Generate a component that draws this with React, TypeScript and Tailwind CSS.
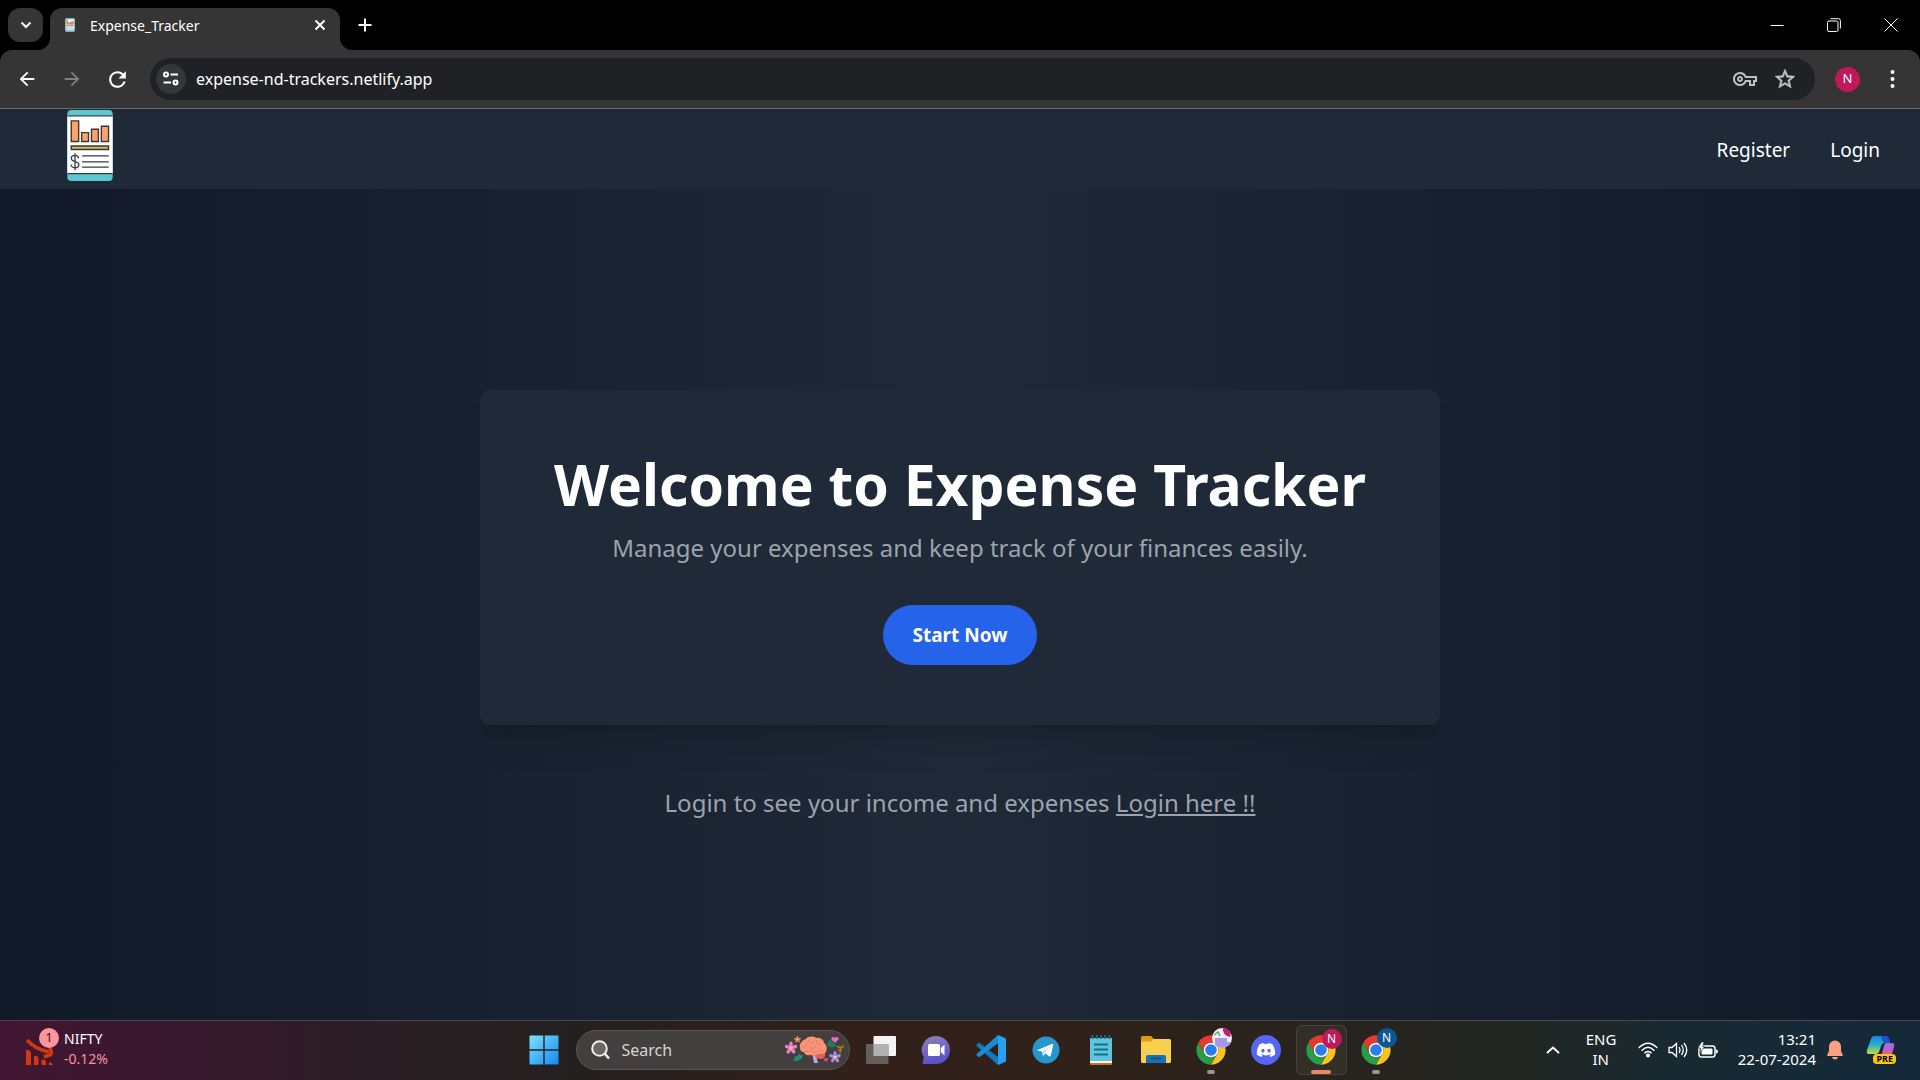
import React from "react";
import { MdArrowBack, MdArrowForward, MdRefresh, MdStarOutline, MdOutlineVpnKey } from "react-icons/md";
import { FaDiscord } from "react-icons/fa";

function SiteControlsIcon() {
  return (
    <svg width="18" height="18" viewBox="0 0 18 18" fill="none" stroke="#fff" strokeWidth="2" aria-hidden="true">
      <circle cx="4" cy="4.500" r="2" />
      <path d="M8.500 4.500H16" />
      <circle cx="13.500" cy="12.500" r="2" />
      <path d="M1.500 12.500H9" />
    </svg>
  );
}

function ReportLogo({ className }: { className: string }) {
  return (
    <svg className={className} viewBox="0 0 46 72" aria-hidden="true">
      <rect width="46" height="72" rx="4" fill="#5bc8cf" />
      <path d="M0 5.500H46V65H0Z" fill="#fff" />
      <path d="M0 6H46M0 64.500H46" stroke="#2f3a4a" strokeWidth="1.200" />
      <g fill="#fba36b" stroke="#3d3636" strokeWidth="1.400">
        <path d="M4 11H11.500V32H4Z" />
        <path d="M14.500 23H21.500V32H14.500Z" />
        <path d="M24.500 19.500H31.500V32H24.500Z" />
        <path d="M34.500 16.500H41.800V32H34.500Z" />
        <path d="M4 36.500H41.800V40H4Z" fill="#cdc15c" />
      </g>
      <path d="M15 46.500H42M15 52.500H42M15 58H42" stroke="#333c4c" strokeWidth="1.300" />
      <path d="M11.500 49C11 46.500 9.500 46 7.700 46C5.500 46 4 47.200 4 49C4 53.500 11.700 51 11.700 55.500C11.700 57.500 10 58.600 7.800 58.600C5.500 58.600 4 57.500 3.700 55.300M7.800 43.800V61" fill="none" stroke="#333c4c" strokeWidth="1.300" />
    </svg>
  );
}

function ChromeIcon() {
  return (
    <svg width="32" height="32" viewBox="0 0 48 48" aria-hidden="true">
      <path d="M4.950 13A22 22 0 0 1 43.050 13L24 13A11 11 0 0 0 14.470 29.500Z" fill="#e53a2e" />
      <path d="M24 46A22 22 0 0 1 4.950 13L14.470 29.500A11 11 0 0 0 33.530 29.500Z" fill="#2a9b47" />
      <path d="M43.050 13A22 22 0 0 1 24 46L33.530 29.500A11 11 0 0 0 24 13Z" fill="#fcc31e" />
      <circle cx="24" cy="24" r="11" fill="#fff" />
      <circle cx="24" cy="24" r="8.700" fill="#2b7de9" />
    </svg>
  );
}

function BrainArt() {
  const flower = (x: number, y: number, r: number, petal: string, heart: string) => (
    <g key={`${x}-${y}`} transform={`translate(${x} ${y})`}>
      {[0, 72, 144, 216, 288].map((a) => (
        <ellipse key={a} cx="0" cy={-r * 0.6} rx={r * 0.3} ry={r * 0.5} fill={petal} transform={`rotate(${a})`} />
      ))}
      <circle r={r * 0.25} fill={heart} />
    </g>
  );
  return (
    <svg width="60" height="28" viewBox="0 0 60 28" aria-hidden="true">
      <path d="M8 25C9 20 13 18 18 19C18 23 14 26 8 25Z" fill="#1f7a64" />
      <path d="M10 24L17 20M11 20L13 24M14 18L16 22" stroke="#2fa384" strokeWidth="1" />
      <path d="M42 9C42 6 44 4 46 4C47 7 51 7 51 10C48 12 44 12 42 9Z" fill="#1f7a64" />
      <path d="M52 10C54 12 56 12 59 10M56 11L55 17M53 14L57 13" stroke="#a8791f" strokeWidth="1.600" fill="none" />
      <path d="M27 17L31 19L33 27H29Z" fill="#b9a5e8" />
      <path d="M15 12C14 8 17 4 21 3C23 0 29 0 31 2C35 1 39 4 39 7C43 9 42 16 40 17C41 21 37 24 33 22C30 22 29 19 26 19C22 20 19 18 19 16C16 16 15 14 15 12Z" fill="#f79478" />
      <path d="M30 19C34 17 38 18 40 17C41 21 37 24 33 22C31 22 30 20 30 19Z" fill="#e8604f" />
      <path d="M18 11C21 11 22 9 21 7M24 4C24 7 27 8 29 6M32 4C31 7 33 9 36 8M25 12C28 13 31 12 31 9M35 12C34 15 37 16 39 14M20 15C23 16 25 14 28 16C30 17 33 16 34 14" stroke="#e07a64" strokeWidth="0.800" fill="none" />
      {flower(6, 12, 6, "#e87fc8", "#ffd23f")}
      {flower(12.5, 3.5, 3.2, "#f0875a", "#ffd9a0")}
      {flower(50, 21, 5.5, "#a58bea", "#ffe36b")}
      <path d="M50 7L46.500 3.500C45.500 1.500 48 0 49.800 1.800C51.500 0 54.500 1 53.500 3.500Z" fill="#ef6db4" />
      <path d="M41 26L38.500 23.500C38 22 40 21.500 41 22.500C42 21.500 44 22 43.200 23.800Z" fill="#e0457b" />
    </svg>
  );
}

function TaskButton({ label, children, state }: { label: string; children: React.ReactNode; state?: "open" | "active" }) {
  return (
    <button
      aria-label={label}
      className={
        state === "active"
          ? "relative mx-[2px] flex h-[50px] w-[51px] items-center justify-center rounded-md border border-white/10 bg-white/5"
          : "relative flex h-[50px] w-[55px] items-center justify-center"
      }
    >
      {children}
      {state === "open" && <span className="absolute bottom-[1px] h-1 w-2 rounded-full bg-[#9b9593]" />}
      {state === "active" && <span className="absolute bottom-0 h-1 w-5 rounded-full bg-[#f08468]" />}
    </button>
  );
}

function ProfileBadge({ className, children }: { className: string; children?: React.ReactNode }) {
  return (
    <span className={`absolute top-[3px] flex size-5 items-center justify-center overflow-hidden rounded-full text-[12px] text-white ${className}`}>
      {children}
    </span>
  );
}

function TabStrip() {
  return (
    <div className="flex h-[50px] items-end bg-black">
      <button aria-label="Search tabs" className="mb-2 ml-2 flex h-[34px] w-[35px] shrink-0 items-center justify-center rounded-xl bg-[#353535]">
        <svg width="12" height="8" viewBox="0 0 12 8" fill="none" stroke="#fff" strokeWidth="2" aria-hidden="true">
          <path d="M1.500 1.500L6 6L10.500 1.500" />
        </svg>
      </button>
      <div className="relative ml-[7px] flex h-[42px] w-[290px] items-center rounded-t-xl bg-[#353535] pr-[14px] pb-2 pl-[15px]">
        <svg className="absolute bottom-0 -left-3" width="12" height="12" aria-hidden="true">
          <path d="M12 0V12H0A12 12 0 0 0 12 0Z" fill="#353535" />
        </svg>
        <svg className="absolute -right-3 bottom-0" width="12" height="12" aria-hidden="true">
          <path d="M0 0V12H12A12 12 0 0 1 0 0Z" fill="#353535" />
        </svg>
        <ReportLogo className="h-[14px] w-[10px]" />
        <span className="ml-[15px] flex-1 text-[14px] text-white">Expense_Tracker</span>
        <button aria-label="Close tab">
          <svg width="12" height="12" viewBox="0 0 12 12" stroke="#fff" strokeWidth="2" aria-hidden="true">
            <path d="M1.500 1.500L10.500 10.500M10.500 1.500L1.500 10.500" />
          </svg>
        </button>
      </div>
      <button aria-label="New tab" className="mb-[18px] ml-[18px]">
        <svg width="14" height="14" viewBox="0 0 14 14" stroke="#fff" strokeWidth="2" aria-hidden="true">
          <path d="M7 0.500V13.500M0.500 7H13.500" />
        </svg>
      </button>
      <div className="mb-[18px] ml-auto flex items-center gap-[43px] pr-[22px]">
        <button aria-label="Minimize">
          <svg width="14" height="14" aria-hidden="true"><path d="M0.500 7.500H13.500" stroke="#fff" /></svg>
        </button>
        <button aria-label="Restore">
          <svg width="14" height="14" fill="none" stroke="#fff" aria-hidden="true">
            <rect x="0.500" y="3" width="10.500" height="10.500" rx="1.500" />
            <path d="M3.500 0.700H11.500Q13.400 0.700 13.400 2.700V10.500" />
          </svg>
        </button>
        <button aria-label="Close">
          <svg width="14" height="14" stroke="#fff" aria-hidden="true"><path d="M0.500 0.500L13.500 13.500M13.500 0.500L0.500 13.500" /></svg>
        </button>
      </div>
    </div>
  );
}

function Toolbar() {
  return (
    <div className="bg-black">
      <div className="flex h-[59px] items-center rounded-t-xl border-b border-[#6a6a6d] bg-[#353535] pr-[25px] pl-4">
        <button aria-label="Back"><MdArrowBack size={22} color="#fff" /></button>
        <button aria-label="Forward" className="ml-[23px]"><MdArrowForward size={22} color="#7e7e7e" /></button>
        <button aria-label="Reload" className="ml-[22px]"><MdRefresh size={25} color="#fff" /></button>
        <div className="ml-[20px] flex h-[42px] flex-1 items-center rounded-full bg-[#202125] pr-[18px] pl-[6px]">
          <button aria-label="View site information" className="flex size-[30px] items-center justify-center rounded-full bg-[#353639]">
            <SiteControlsIcon />
          </button>
          <input aria-label="Address" defaultValue="expense-nd-trackers.netlify.app" className="ml-[10px] flex-1 bg-transparent text-[16px] text-white outline-none" />
          <button aria-label="Manage passwords"><MdOutlineVpnKey size={24} color="#c1c1c3" /></button>
          <button aria-label="Bookmark this tab" className="ml-4"><MdStarOutline size={24} color="#c1c1c3" stroke="#c1c1c3" strokeWidth="0.500" /></button>
        </div>
        <button aria-label="Profile" className="ml-5 flex size-[25px] items-center justify-center rounded-full bg-[#c2185b] text-[13px] text-white">N</button>
        <button aria-label="Menu" className="ml-[30px]">
          <svg width="5" height="18" fill="#fff" aria-hidden="true">
            <circle cx="2.500" cy="2" r="2" /><circle cx="2.500" cy="9" r="2" /><circle cx="2.500" cy="16" r="2" />
          </svg>
        </button>
      </div>
    </div>
  );
}

function Taskbar() {
  return (
    <footer className="grid h-[60px] grid-cols-[1fr_auto_1fr] items-center border-t border-[#48484c] bg-[linear-gradient(90deg,#421632_0%,#38182e_9%,#2a1f24_20%,#242020_30%,#33201a_45%,#2e221b_60%,#26241f_72%,#222724_80%,#172a33_88%,#15293a_100%)] pb-[2px]">
      <a href="#widgets" className="flex items-center pl-[25px]">
        <span className="relative mt-1 block">
          <svg width="29" height="28" viewBox="0 0 29 28" fill="#cf3a0e" aria-hidden="true">
            <path d="M1 12H4L6 15V27H1ZM9 18H12L13.500 20V27H9ZM16.500 21.500H19L21 23V27H16.500ZM24 24.500H26L28 27H24Z" />
            <path d="M2 2C8 9 15 12 24 14M27 16L19 19M27 16L25 9" fill="none" stroke="#cf3a0e" strokeWidth="3.500" />
          </svg>
          <span className="absolute -top-[10px] left-[14px] flex size-5 items-center justify-center rounded-full bg-[#fc959c] text-[13px] text-[#3a1020]">1</span>
        </span>
        <span className="ml-[10px] pb-[2px] text-[14px] leading-5">
          <span className="block text-white">NIFTY</span>
          <span className="block text-[#f692a2]">-0.12%</span>
        </span>
      </a>
      <div className="flex items-center">
        <TaskButton label="Start">
          <svg width="30" height="30" viewBox="0 0 30 30" aria-hidden="true">
            <defs>
              <linearGradient id="win" x1="0" y1="0" x2="1" y2="1">
                <stop offset="0" stopColor="#7fe0ff" /><stop offset="1" stopColor="#0f8af0" />
              </linearGradient>
            </defs>
            <path d="M0.500 1Q0.500 0.500 1 0.500H14.300V14.300H0.500ZM15.700 0.500H29Q29.500 0.500 29.500 1V14.300H15.700ZM0.500 15.700H14.300V29.500H1Q0.500 29.500 0.500 29ZM15.700 15.700H29.500V29Q29.500 29.500 29 29.500H15.700Z" fill="url(#win)" />
          </svg>
        </TaskButton>
        <label className="mx-1 flex h-10 w-[274px] items-center rounded-full border border-[#5a5452] bg-[#433f3e] pr-1 pl-[14px]">
          <svg width="19" height="20" viewBox="0 0 19 20" fill="#6b6766" stroke="#f0f0f0" strokeWidth="2" aria-hidden="true">
            <circle cx="8.500" cy="8.500" r="7.300" /><path d="M13.700 13.700L18 18.500" strokeWidth="2.500" />
          </svg>
          <input aria-label="Search" placeholder="Search" className="ml-3 w-full min-w-0 flex-1 bg-transparent text-[16px] placeholder:text-[#d6d4d3] outline-none" />
          <BrainArt />
        </label>
        <TaskButton label="Task view">
          <svg width="30" height="28" viewBox="0 0 30 28" aria-hidden="true">
            <rect x="7.500" y="0" width="22.500" height="20" rx="1" fill="#f4f4f4" />
            <rect x="0" y="8" width="22.500" height="20" rx="1" fill="#6f6b69" fillOpacity="0.850" />
            <path d="M7.500 8H22.500V20H7.500Z" fill="#b1b1b1" />
          </svg>
        </TaskButton>
        <TaskButton label="Chat">
          <svg width="30" height="30" viewBox="0 0 30 30" aria-hidden="true">
            <defs>
              <linearGradient id="chat" x1="0" y1="0" x2="0.300" y2="1">
                <stop offset="0" stopColor="#8f82b8" /><stop offset="1" stopColor="#5a52c8" />
              </linearGradient>
            </defs>
            <path d="M15 1A14 14 0 1 1 15 29H1.500L3 22.500A14 14 0 0 1 15 1Z" fill="url(#chat)" />
            <rect x="7" y="9" width="12" height="12" rx="1.500" fill="#fff" />
            <path d="M19.800 13L23.500 9.500V20.500L19.800 17Z" fill="#fff" />
          </svg>
        </TaskButton>
        <TaskButton label="Visual Studio Code">
          <svg width="30" height="30" viewBox="0 0 30 30" aria-hidden="true">
            <path d="M0.700 11Q0 10.200 0.800 9.500L2.300 8.100Q3 7.600 3.700 8.100L22 22V30Z" fill="#1478bd" />
            <path d="M22 0V8.200L3.700 21.900Q3 22.400 2.300 21.900L0.800 20.500Q0 19.800 0.700 19Z" fill="#1a8ad4" />
            <path d="M22 0L29 3Q30 3.500 30 4.500V25.500Q30 26.500 29 27L22 30Z" fill="#27a0f0" />
          </svg>
        </TaskButton>
        <TaskButton label="Telegram">
          <svg width="28" height="28" viewBox="0 0 28 28" aria-hidden="true">
            <circle cx="14" cy="14" r="13.500" fill="#2497cf" />
            <path d="M5.500 14L20.500 7.800Q21.500 7.600 21.200 9L18.800 19.800Q18.300 21 17.200 20.300L13.300 17.500L11.500 19.500Q10.800 20 10.700 19L10 15.500L6 14.800Q5 14.400 5.500 14Z" fill="#fff" />
            <path d="M11 15.500L17.500 10.500L12.500 16.500L11.500 18.500Z" fill="#a9cfe6" />
          </svg>
        </TaskButton>
        <TaskButton label="Notepad">
          <svg width="24" height="30" viewBox="0 0 24 30" aria-hidden="true">
            <rect x="1" y="24" width="22" height="6" rx="1" fill="#c9711e" />
            <rect x="1" y="23" width="22" height="5" fill="#f4f4f0" />
            <path d="M1 3H23V26H1Z" fill="#5fc4dc" />
            <path d="M3.500 0V4M7.800 0V4M12 0V4M16.200 0V4M20.500 0V4" stroke="#16708a" strokeWidth="1.800" />
            <path d="M5 9.500H19M5 14.500H19M5 19.500H19" stroke="#14708c" strokeWidth="1.800" />
          </svg>
        </TaskButton>
        <TaskButton label="File Explorer">
          <svg width="30" height="27" viewBox="0 0 30 27" aria-hidden="true">
            <path d="M0 1.500Q0 0 1.500 0H10L13 3V8H0Z" fill="#dc9d13" />
            <path d="M0 5.500H10L12.500 3H28.500Q30 3 30 4.500V25.500Q30 27 28.500 27H1.500Q0 27 0 25.500Z" fill="#fbcf4e" />
            <path d="M5 27V21Q5 19 7 19H23Q25 19 25 21V27Z" fill="#1473b8" />
            <path d="M10 22.500H20" stroke="#0a4f85" strokeWidth="1.500" />
          </svg>
        </TaskButton>
        <TaskButton label="Chrome" state="open">
          <ChromeIcon />
          <ProfileBadge className="right-[7px] bg-[#f1eef4]">
            <svg width="20" height="20" aria-hidden="true">
              <path d="M11 0Q10 7 18 9L20 0Z" fill="#c81a78" />
              <path d="M3 10H15V14H20V20H3Z" fill="#a796ea" />
              <path d="M2 7L6 4L8 8" stroke="#74a06c" strokeWidth="1.500" fill="none" />
            </svg>
          </ProfileBadge>
        </TaskButton>
        <TaskButton label="Discord">
          <span className="flex size-[30px] items-center justify-center rounded-full bg-[#5566f0]"><FaDiscord size={20} color="#fff" /></span>
        </TaskButton>
        <TaskButton label="Chrome, profile N" state="active">
          <ChromeIcon />
          <ProfileBadge className="right-1 bg-[#c2185b]">N</ProfileBadge>
        </TaskButton>
        <TaskButton label="Chrome, second profile" state="open">
          <ChromeIcon />
          <ProfileBadge className="right-[7px] bg-[#0b5796]">N</ProfileBadge>
        </TaskButton>
      </div>
      <div className="flex items-center justify-end pr-6 text-[15px] leading-5 text-white">
        <button aria-label="Show hidden icons">
          <svg width="14" height="8" fill="none" stroke="#fff" strokeWidth="2" aria-hidden="true"><path d="M1 7L7 1.500L13 7" /></svg>
        </button>
        <button className="ml-[26px] w-[30px] pb-[2px] whitespace-nowrap">ENG<br />IN</button>
        <button aria-label="Network, volume and battery" className="ml-[22px] flex items-center gap-[10px]">
          <svg width="20" height="16" viewBox="0 0 20 16" fill="none" stroke="#fff" strokeWidth="1.500" aria-hidden="true">
            <path d="M0.700 6Q10 -3.500 19.300 6M3.600 8.700Q10 2 16.400 8.700M6.400 11.300Q10 7.500 13.600 11.300" />
            <circle cx="10" cy="13.500" r="1.300" fill="#fff" />
          </svg>
          <svg width="20" height="16" viewBox="0 0 20 16" fill="none" stroke="#fff" strokeWidth="1.300" aria-hidden="true">
            <path d="M1 5.500H4L8.500 1.500V14.500L4 10.500H1ZM11 5Q13 8 11 11M13.500 3Q17 8 13.500 13M16 1Q21.500 8 16 15" />
          </svg>
          <svg width="20" height="16" viewBox="0 0 20 16" aria-hidden="true">
            <rect x="1" y="4" width="16" height="11" rx="2.500" fill="none" stroke="#fff" strokeWidth="1.500" />
            <rect x="3.500" y="6.500" width="11" height="6" rx="1" fill="#fff" />
            <path d="M18 7.500Q20 7.500 20 9.500Q20 11.500 18 11.500Z" fill="#fff" />
            <path d="M3.500 0L0 6H2.500L2 11L6.500 4.500H4.500L6 0Z" fill="#fff" stroke="#172a33" strokeWidth="0.600" />
          </svg>
        </button>
        <button className="ml-5 pb-[2px] text-right whitespace-nowrap">13:21<br />22-07-2024</button>
        <button aria-label="Notifications" className="ml-[11px]">
          <svg width="16" height="20" viewBox="0 0 16 20" fill="#fba183" aria-hidden="true">
            <path d="M8 0.500A6 6 0 0 1 14 6.500V11L15.800 15Q16 16 15 16H1Q0 16 0.200 15L2 11V6.500A6 6 0 0 1 8 0.500ZM5 17H11Q10.500 19.500 8 19.500Q5.500 19.500 5 17Z" />
          </svg>
        </button>
        <button aria-label="Copilot" className="relative ml-[23px]">
          <svg width="30" height="29" viewBox="0 0 30 29" aria-hidden="true">
            <defs>
              <linearGradient id="cpa" x1="0" y1="0" x2="0" y2="1"><stop offset="0" stopColor="#1f7fe8" /><stop offset="0.500" stopColor="#29b2c8" /><stop offset="1" stopColor="#c8d83c" /></linearGradient>
              <linearGradient id="cpb" x1="0" y1="0" x2="0" y2="1"><stop offset="0" stopColor="#9a6bf0" /><stop offset="1" stopColor="#ee5a8a" /></linearGradient>
            </defs>
            <path d="M8 1H20Q22 1 23 4L24 8H18Q16 8 15 11L13 17Q12 19 10 19H3Q0 19 1 15L5 4Q6 1 8 1Z" fill="url(#cpa)" />
            <path d="M15 1H20Q22 1 23 4L24 8H19Q17 8 16 5Z" fill="#1557c9" />
            <path d="M20 8H26Q29 8 28 12L26 19Q25 23 22 23H12Q15 22 16 18L18 11Q18.500 8 20 8Z" fill="url(#cpb)" />
          </svg>
          <span className="absolute right-0 bottom-0 flex h-[10px] items-center rounded-sm bg-[#fbc512] px-[3px] text-[9px] font-bold text-black">PRE</span>
        </button>
      </div>
    </footer>
  );
}

export default function App() {
  return (
    <div className="flex min-h-screen flex-col font-['Noto_Sans',sans-serif]">
      <TabStrip />
      <Toolbar />
      <nav className="flex h-20 items-start justify-between bg-[#1f2937] pr-10 pl-[67px]">
        <a href="#home" aria-label="Expense Tracker home" className="pt-px"><ReportLogo className="h-[71px] w-[46px]" /></a>
        <div className="flex gap-10 self-center pt-[2px] text-[19px] leading-[30px] text-white">
          <a href="#register">Register</a>
          <a href="#login">Login</a>
        </div>
      </nav>
      <main className="flex flex-1 flex-col items-center justify-center bg-[linear-gradient(90deg,#111827,#1f2937_50%,#111827)] text-[24px] leading-[35px] text-[#9ca3af]">
        <section className="flex w-full max-w-[960px] flex-col items-center rounded-[10px] bg-[#1f2937] p-[60px] shadow-[0_25px_31px_-6px_rgba(0,0,0,0.1),0_10px_12px_-6px_rgba(0,0,0,0.1)]">
          <h1 className="mb-4 pt-1 text-[57px] leading-[60px] font-bold whitespace-nowrap text-white">Welcome to Expense Tracker</h1>
          <p className="mb-10">Manage your expenses and keep track of your finances easily.</p>
          <button className="h-[60px] rounded-full bg-[#2563eb] px-[30px] pt-[2px] text-[19px] font-bold text-white">Start Now</button>
        </section>
        <p className="mt-[60px]">
          Login to see your income and expenses <a href="#login" className="underline">Login here !!</a>
        </p>
      </main>
      <Taskbar />
    </div>
  );
}
